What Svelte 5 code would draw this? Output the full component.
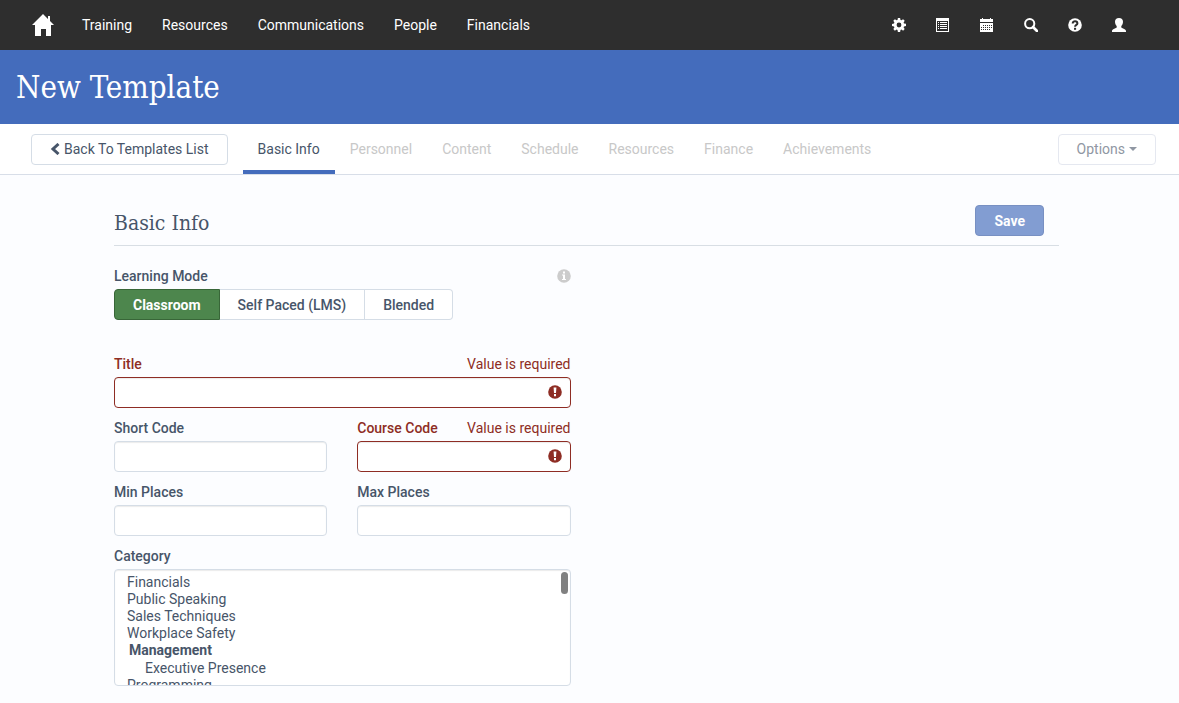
<script lang="ts">
  interface Tab {
    label: string;
    enabled: boolean;
  }

  const navLinks = ['Training', 'Resources', 'Communications', 'People', 'Financials'];

  const tools = ['Settings', 'Reports', 'Calendar', 'Search', 'Help', 'Account'];

  const tabs: Tab[] = [
    { label: 'Basic Info', enabled: true },
    { label: 'Personnel', enabled: false },
    { label: 'Content', enabled: false },
    { label: 'Schedule', enabled: false },
    { label: 'Resources', enabled: false },
    { label: 'Finance', enabled: false },
    { label: 'Achievements', enabled: false },
  ];

  const modes = ['Classroom', 'Self Paced (LMS)', 'Blended'];

  let mode = $state('Classroom');
  let title = $state('');
  let shortCode = $state('');
  let courseCode = $state('');
  let minPlaces = $state('');
  let maxPlaces = $state('');
  let categories: string[] = $state([]);
</script>

{#snippet toolIcon(name: string)}
  <svg viewBox="0 0 14 14" width="14" height="14" aria-hidden="true">
    {#if name === 'Settings'}
      <path
        fill-rule="evenodd"
        d="M5.9 0h2.2l.4 1.9 1 .4 1.6-1.1 1.6 1.6-1.1 1.6.4 1 2 .4v2.2l-2 .4-.4 1 1.1 1.7-1.6 1.6-1.6-1.1-1 .4-.4 2H5.9l-.4-2-1-.4-1.6 1.1-1.6-1.6 1.1-1.7-.4-1L0 8.1V5.9l2-.4.4-1-1.1-1.7 1.6-1.6 1.6 1.1 1-.4zM7 4.6a2.4 2.4 0 1 0 0 4.8 2.4 2.4 0 0 0 0-4.800z"
      />
    {:else if name === 'Reports'}
      <path fill-rule="evenodd" d="M0 0h13v14H0zM1 3v10h11V3z" />
      <path d="M2 4h1v1H2zM4 4h7v1H4zM2 6h1v1H2zM4 6h7v1H4zM2 8h1v1H2zM4 8h7v1H4zM2 10h1v1H2zM4 10h7v1H4z" />
    {:else if name === 'Calendar'}
      <path d="M0 1h2V0h1v1h7V0h1v1h2v3H0z" />
      <path
        fill-rule="evenodd"
        d="M0 5h13v9H0zM3 7h1v1H3zM5 7h1v1H5zM7 7h1v1H7zM9 7h1v1H9zM11 7h1v1h-1zM1 9h1v1H1zM3 9h1v1H3zM5 9h1v1H5zM7 9h1v1H7zM9 9h1v1H9zM11 9h1v1h-1zM1 11h1v1H1zM3 11h1v1H3zM5 11h1v1H5zM7 11h1v1H7zM9 11h1v1H9z"
      />
    {:else if name === 'Search'}
      <circle cx="5.7" cy="5.7" r="4.6" fill="none" stroke="currentColor" stroke-width="2" />
      <path d="M9 9l4 4" fill="none" stroke="currentColor" stroke-width="2.6" stroke-linecap="round" />
    {:else if name === 'Help'}
      <circle cx="7" cy="7" r="6.8" />
      <path d="M4.700 5.600c0-3.200 4.700-2.900 4.700-.2C9.400 7.100 7.100 6.800 7.100 8.800" fill="none" stroke="#2e2e2e" stroke-width="2" />
      <path d="M6 9.800h2.100v2H6z" fill="#2e2e2e" />
    {:else}
      <path
        d="M7 0c2.600 0 4 1.500 4 3.800 0 1.900-.8 3.400-1.700 4.300v1.500c.5.800 4.700 1.400 4.700 3.600v.8H0v-.8c0-2.200 4.200-2.800 4.700-3.600V8.100C3.800 7.200 3 5.700 3 3.800 3 1.500 4.400 0 7 0z"
      />
    {/if}
  </svg>
{/snippet}

{#snippet errorIcon()}
  <svg class="error-icon" viewBox="0 0 14 14" width="14" height="14" aria-hidden="true">
    <circle cx="7" cy="7" r="6.8" fill="currentColor" />
    <path d="M5.600 2.500h2.800L8 8H6zM6 9h2v2.200H6z" fill="#fff" />
  </svg>
{/snippet}

<header class="topbar">
  <a class="home" href="#home" aria-label="Home">
    <svg viewBox="0 0 22 22" width="22" height="22" aria-hidden="true">
      <path d="M11 0l5 5V2h2v5l4 4h-3v11h-5v-7H9v7H3V11H0z" />
    </svg>
  </a>
  <nav class="nav-links">
    {#each navLinks as link (link)}
      <a href="#{link.toLowerCase()}">{link}</a>
    {/each}
  </nav>
  <div class="tools">
    {#each tools as tool (tool)}
      <button type="button" aria-label={tool}>{@render toolIcon(tool)}</button>
    {/each}
  </div>
</header>

<div class="banner">
  <h1>New Template</h1>
</div>

<div class="tabbar">
  <button type="button" class="btn back">
    <svg viewBox="0 0 10 12" width="10" height="12" aria-hidden="true">
      <path d="M8.500 1L3 6l5.500 5" fill="none" stroke="currentColor" stroke-width="3" />
    </svg>
    Back To Templates List
  </button>
  <div class="tabs">
    {#each tabs as tab (tab.label)}
      <button type="button" class="tab" class:active={tab.enabled} disabled={!tab.enabled}>
        {tab.label}
      </button>
    {/each}
  </div>
  <button type="button" class="btn options" disabled>
    Options <span class="caret"></span>
  </button>
</div>

<main>
  <div class="section-head">
    <h2>Basic Info</h2>
    <button type="button" class="btn save" disabled>Save</button>
  </div>

  <form class="columns">
    <div class="fields">
      <div class="field mode-field">
        <div class="label-row">
          <span class="label" id="mode-label">Learning Mode</span>
          <svg class="info" viewBox="0 0 14 14" width="14" height="14" aria-hidden="true">
            <circle cx="7" cy="7" r="6.8" fill="currentColor" />
            <path d="M6 2.500h2v2H6zM5 5.500h3v4.500h1V11H5v-1h1V6.500H5z" fill="#fff" />
          </svg>
        </div>
        <div class="modes" role="group" aria-labelledby="mode-label">
          {#each modes as item (item)}
            <button type="button" class:selected={mode === item} onclick={() => (mode = item)}>
              {item}
            </button>
          {/each}
        </div>
      </div>

      <div class="field" class:invalid={!title}>
        <div class="label-row">
          <label class="label" for="title">Title</label>
          {#if !title}<span>Value is required</span>{/if}
        </div>
        <div class="control">
          <input id="title" type="text" bind:value={title} />
          {#if !title}{@render errorIcon()}{/if}
        </div>
      </div>

      <div class="pair">
        <div class="field">
          <div class="label-row"><label class="label" for="short-code">Short Code</label></div>
          <input id="short-code" type="text" bind:value={shortCode} />
        </div>
        <div class="field" class:invalid={!courseCode}>
          <div class="label-row">
            <label class="label" for="course-code">Course Code</label>
            {#if !courseCode}<span>Value is required</span>{/if}
          </div>
          <div class="control">
            <input id="course-code" type="text" bind:value={courseCode} />
            {#if !courseCode}{@render errorIcon()}{/if}
          </div>
        </div>
      </div>

      <div class="pair">
        <div class="field">
          <div class="label-row"><label class="label" for="min-places">Min Places</label></div>
          <input id="min-places" type="text" bind:value={minPlaces} />
        </div>
        <div class="field">
          <div class="label-row"><label class="label" for="max-places">Max Places</label></div>
          <input id="max-places" type="text" bind:value={maxPlaces} />
        </div>
      </div>

      <div class="field">
        <div class="label-row"><label class="label" for="category">Category</label></div>
        <div class="control">
          <select id="category" multiple bind:value={categories}>
            <option>Financials</option>
            <option>Public Speaking</option>
            <option>Sales Techniques</option>
            <option>Workplace Safety</option>
            <optgroup label="Management">
              <option>Executive Presence</option>
            </optgroup>
            <option>Programming</option>
          </select>
          <span class="scroll-thumb"></span>
        </div>
      </div>
    </div>
  </form>
</main>

<style>
  :global(body) {
    background: #fcfdff;
    color: #475569;
    font: 14px/20px Roboto, "Liberation Sans", sans-serif;
  }

  button,
  input,
  select {
    box-sizing: border-box;
    font: inherit;
    color: inherit;
  }

  svg {
    display: block;
    flex-shrink: 0;
    fill: currentColor;
  }

  h1,
  h2 {
    margin: 0;
    font-family: "Roboto Slab", "DejaVu Serif Condensed", "DejaVu Serif", serif;
    font-weight: 300;
  }

  .topbar {
    display: flex;
    align-items: center;
    height: 50px;
    padding: 0 53px 0 32px;
    background: #2e2e2e;
    color: #fff;
  }

  .topbar a {
    color: inherit;
    text-decoration: none;
  }

  .nav-links {
    display: flex;
    gap: 30px;
    margin-left: 28px;
  }

  .tools {
    display: flex;
    gap: 30px;
    margin-left: auto;
  }

  .tools button {
    padding: 0;
    border: 0;
    background: none;
    cursor: pointer;
  }

  .banner {
    padding: 17px 16px;
    background: #446cbc;
    color: #fff;
  }

  h1 {
    font-size: 31px;
    line-height: 40px;
  }

  .tabbar {
    display: flex;
    align-items: center;
    height: 50px;
    padding: 0 23px 0 31px;
    background: #fff;
    border-bottom: 1px solid #d8dee8;
  }

  .btn {
    display: flex;
    align-items: center;
    height: 31px;
    padding: 0 18px;
    background: #fff;
    border: 1px solid #d5dde6;
    border-radius: 4px;
    white-space: nowrap;
  }

  .back {
    gap: 4px;
  }

  .tabs {
    display: flex;
    align-self: stretch;
    margin-left: 15px;
  }

  .tab {
    padding: 4px 15px 0;
    background: none;
    border: 0;
    border-bottom: 4px solid transparent;
    color: #c8c8c8;
  }

  .tab.active {
    border-bottom-color: #446cbc;
    color: #475569;
  }

  .options {
    gap: 4px;
    margin-left: auto;
    border-color: #e5e8f0;
    color: #9097a3;
  }

  .caret {
    border: 4px solid transparent;
    border-top-color: currentColor;
    border-bottom: 0;
  }

  main {
    padding: 30px 120px 16px 114px;
  }

  .section-head {
    display: flex;
    justify-content: space-between;
    padding: 0 15px 9px 0;
    border-bottom: 1px solid #d8dee4;
  }

  h2 {
    font-size: 21px;
    line-height: 36px;
    height: 31px;
  }

  .save {
    background: #829dd2;
    border-color: #7890c2;
    color: #fff;
    font-weight: 700;
  }

  .columns {
    display: grid;
    grid-template-columns: 1fr 1fr;
    gap: 32px;
    padding-top: 20px;
  }

  .fields {
    display: flex;
    flex-direction: column;
    gap: 10px;
    min-width: 0;
  }

  .field {
    display: flex;
    flex-direction: column;
    gap: 3px;
    min-width: 0;
  }

  .mode-field {
    margin-bottom: 24px;
  }

  .pair {
    display: grid;
    grid-template-columns: 1fr 1fr;
    gap: 30px;
  }

  .label-row {
    display: flex;
    align-items: center;
    justify-content: space-between;
  }

  .label {
    font-weight: 500;
  }

  .info {
    color: #ccc;
  }

  .modes {
    display: flex;
  }

  .modes button {
    height: 31px;
    padding: 0 18px;
    background: #fff;
    border: 1px solid #d5dde6;
    border-left: 0;
    font-weight: 500;
  }

  .modes button:first-child {
    border-left: 1px solid #d5dde6;
    border-radius: 4px 0 0 4px;
  }

  .modes button:last-child {
    border-radius: 0 4px 4px 0;
  }

  .modes button.selected {
    background: #4d864d;
    border-color: #386638;
    color: #fff;
    font-weight: 700;
  }

  .control {
    position: relative;
    display: flex;
  }

  input,
  select {
    width: 100%;
    background: #fff;
    border: 1px solid #d5dde6;
    border-radius: 4px;
    box-shadow: inset 0 1px 1px rgba(0, 0, 0, 0.08);
    outline: 0;
  }

  input {
    height: 31px;
    padding: 0 12px;
  }

  .invalid {
    color: #8e2d24;
  }

  .invalid input {
    border-color: #8e2d24;
  }

  .error-icon {
    position: absolute;
    top: 8px;
    right: 9px;
  }

  select {
    height: 117px;
    padding: 4px 12px 0;
    scrollbar-width: none;
  }

  option,
  optgroup {
    min-height: 17px;
    padding: 0;
    line-height: 17px;
  }

  optgroup option {
    padding-left: 18px;
  }

  .scroll-thumb {
    position: absolute;
    top: 3px;
    right: 3px;
    width: 7px;
    height: 22px;
    border-radius: 4px;
    background: #808080;
    pointer-events: none;
  }
</style>
